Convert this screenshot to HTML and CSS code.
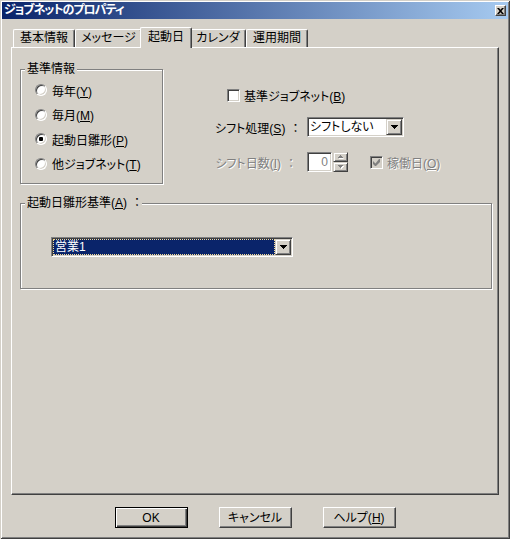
FILE: index.html
```html
<!DOCTYPE html>
<html lang="ja">
<head>
<meta charset="utf-8">
<title>ジョブネットのプロパティ</title>
<link rel="stylesheet" href="styles.css">
</head>
<body>
<div class="window">
  <div class="titlebar">
    <span class="title">ジョブネットのプロパティ</span>
    <span class="close" aria-label="閉じる"><svg width="7" height="6" viewBox="0 0 7 6"><path d="M0 0h2l1.5 1.8L5 0h2L4.5 3 7 6H5L3.5 4.2 2 6H0l2.5-3z" fill="#000"/></svg></span>
  </div>

  <div class="tabs">
    <div class="tab tab--basic">基本情報</div>
    <div class="tab tab--message">メッセージ</div>
    <div class="tab tab--start tab--active">起動日</div>
    <div class="tab tab--calendar">カレンダ</div>
    <div class="tab tab--period">運用期間</div>
  </div>

  <div class="panel">
    <div class="top">
      <div class="group group--base">
        <div class="group-label">基準情報</div>
        <div class="radios">
          <div class="radio-row"><span class="radio"></span><span>毎年(<u>Y</u>)</span></div>
          <div class="radio-row"><span class="radio"></span><span>毎月(<u>M</u>)</span></div>
          <div class="radio-row"><span class="radio radio--checked"></span><span>起動日雛形(<u>P</u>)</span></div>
          <div class="radio-row"><span class="radio"></span><span>他ジョブネット(<u>T</u>)</span></div>
        </div>
      </div>

      <div class="options">
        <div class="check-row">
          <span class="check"></span><span class="check-text">基準ジョブネット(<u>B</u>)</span>
        </div>
        <div class="field-row">
          <span class="field-label">シフト処理(<u>S</u>)<span class="colon">：</span></span>
          <div class="combo combo--shift">
            <span class="combo-text">シフトしない</span>
            <span class="combo-btn"><svg width="7" height="4" viewBox="0 0 7 4"><path d="M0 0h7v1H6v1H5v1H4v1H3V3H2V2H1V1H0z" fill="#000"/></svg></span>
          </div>
        </div>
        <div class="field-row field-row--disabled">
          <span class="field-label">シフト日数(<u>I</u>)<span class="colon">：</span></span>
          <div class="spin">
            <div class="spin-edit">0</div>
            <div class="spin-btns">
              <span class="spin-btn"><svg width="6" height="4" viewBox="0 0 6 4"><path d="M3 1h1v1h1v1H5.5v1H1V3h1V2h1z" fill="#fff"/><path d="M2 0h1v1h1v1h1v1H0V2h1V1h1z" fill="#808080"/></svg></span>
              <span class="spin-btn"><svg width="6" height="4" viewBox="0 0 6 4"><path d="M1 1h5v1H5v1H4v1H3V3H2V2H1z" fill="#fff"/><path d="M0 0h5v1H4v1H3v1H2V2H1V1H0z" fill="#808080"/></svg></span>
            </div>
          </div>
          <span class="check check--disabled"><svg width="7" height="7" viewBox="0 0 7 7"><path d="M6 0h1v3L3 7H2L0 5V2l2.5 2.5z" fill="#808080"/></svg></span>
          <span class="check-text">稼働日(<u>O</u>)</span>
        </div>
      </div>
    </div>

    <div class="group group--ref">
      <div class="group-label">起動日雛形基準(<u>A</u>)<span class="colon">：</span></div>
      <div class="combo combo--ref">
        <span class="combo-text combo-text--selected">営業1</span>
        <span class="combo-btn"><svg width="7" height="4" viewBox="0 0 7 4"><path d="M0 0h7v1H6v1H5v1H4v1H3V3H2V2H1V1H0z" fill="#000"/></svg></span>
      </div>
    </div>
  </div>

  <div class="buttons">
    <button class="btn btn--default" type="button">OK</button>
    <button class="btn" type="button">キャンセル</button>
    <button class="btn" type="button">ヘルプ(<u>H</u>)</button>
  </div>
</div>
</body>
</html>
```

FILE: styles.css
```css
* {
  box-sizing: border-box;
}

html,
body {
  margin: 0;
  padding: 0;
  background: #d4d0c8;
}

body {
  font-family: "Liberation Sans", "Noto Sans CJK JP", sans-serif;
  font-size: 12px;
  color: #000;
  font-feature-settings: "palt";
}

u {
  text-decoration-thickness: 1px;
  text-underline-offset: 1px;
}

.window {
  width: 510px;
  height: 539px;
  padding: 2px;
  overflow: hidden;
  display: flex;
  flex-direction: column;
  background: #d4d0c8;
  box-shadow: inset 1px 1px #d4d0c8, inset -1px -1px #404040, inset 2px 2px #fff, inset -2px -2px #808080;
}

/* Title bar */
.titlebar {
  height: 17px;
  flex: none;
  display: flex;
  align-items: center;
  justify-content: space-between;
  padding: 0 2px 0 2px;
  background: linear-gradient(to right, #0a246a, #a6caf0);
  color: #fff;
  font-weight: bold;
}

.title {
  line-height: 17px;
  letter-spacing: -1px;
  white-space: nowrap;
}

.close {
  width: 11px;
  height: 11px;
  display: flex;
  align-items: center;
  justify-content: center;
  background: #d4d0c8;
  border: 1px solid;
  border-color: #fff #404040 #404040 #fff;
  box-shadow: inset -1px -1px #808080;
}

/* Tabs */
.tabs {
  height: 20px;
  flex: none;
  display: flex;
  align-items: flex-end;
  margin: 8px 0 0 11px;
}

.tab {
  height: 18px;
  line-height: 17px;
  text-align: center;
  white-space: nowrap;
  background: #d4d0c8;
  border-top: 1px solid #fff;
  border-left: 1px solid #fff;
  border-right: 1px solid #404040;
  border-radius: 2px 2px 0 0;
  box-shadow: inset -1px 0 #808080;
  flex: none;
}

.tab--basic { width: 62px; }
.tab--message { width: 67px; }
.tab--start { width: 48px; }
.tab--calendar { width: 56px; }
.tab--period { width: 62px; }

.tab--active {
  width: 52px;
  height: 21px;
  line-height: 18px;
  margin: 0 -2px -1px;
  position: relative;
  z-index: 1;
}

/* Panel */
.panel {
  height: 448px;
  flex: none;
  margin: 0 9px;
  background: #d4d0c8;
  border: 1px solid;
  border-color: #fff #404040 #404040 #fff;
  box-shadow: inset -1px -1px #808080;
}

.top {
  display: flex;
  align-items: flex-start;
}

.group {
  border: 1px solid #808080;
  box-shadow: inset 1px 1px #fff, 1px 1px #fff;
}

.group-label {
  width: fit-content;
  height: 14px;
  line-height: 14px;
  margin: -8px 0 0 4px;
  padding: 0 2px;
  background: #d4d0c8;
  white-space: nowrap;
}

.colon {
  margin-left: 7px;
}

.group--base {
  width: 143px;
  height: 115px;
  margin: 21px 0 0 8px;
  flex: none;
}

.radios {
  padding: 1.7px 0 0 14px;
}

.radio-row {
  height: 24.67px;
  display: flex;
  align-items: center;
  white-space: nowrap;
}

.radio {
  width: 12px;
  height: 12px;
  flex: none;
  margin-right: 5px;
  border-radius: 50%;
  border: 1px solid;
  border-color: #808080 #fff #fff #808080;
  box-shadow: inset 1px 1px #404040, inset -1px -1px #d4d0c8;
  background: #fff;
  display: flex;
  align-items: center;
  justify-content: center;
}

.radio--checked::after {
  content: "";
  width: 4px;
  height: 4px;
  border-radius: 1px;
  background: #000;
}

/* Right-hand options */
.options {
  margin-left: 52px;
  padding-top: 40px;
}

.check-row {
  height: 14px;
  display: flex;
  align-items: center;
  padding-left: 12px;
}

.check {
  width: 13px;
  height: 13px;
  flex: none;
  border: 1px solid;
  border-color: #808080 #fff #fff #808080;
  box-shadow: inset 1px 1px #404040, inset -1px -1px #d4d0c8;
  background: #fff;
  display: flex;
  align-items: center;
  justify-content: center;
}

.check--disabled {
  background: #d4d0c8;
  margin-left: 22px;
}

.check-text {
  margin-left: 4px;
  white-space: nowrap;
}

.field-row {
  height: 20px;
  display: flex;
  align-items: center;
  margin-top: 15px;
}

.field-row--disabled {
  color: #808080;
  text-shadow: 1px 1px #fff;
}

.field-label {
  width: 92px;
  flex: none;
  text-align: right;
  padding-right: 13px;
  white-space: nowrap;
}

/* Combo box */
.combo {
  height: 20px;
  display: flex;
  padding: 1px;
  border: 1px solid;
  border-color: #808080 #fff #fff #808080;
  box-shadow: inset 1px 1px #404040, inset -1px -1px #d4d0c8;
  background: #fff;
}

.combo--shift {
  width: 97px;
}

.combo-text {
  flex: 1;
  min-width: 0;
  line-height: 16px;
  padding-left: 1px;
  white-space: nowrap;
  overflow: hidden;
}

.combo-text--selected {
  background: #0a246a;
  color: #fff;
  border: 1px dotted #f5db95;
  line-height: 14px;
  padding-left: 1px;
}

.combo-btn {
  width: 16px;
  height: 16px;
  flex: none;
  display: flex;
  align-items: center;
  justify-content: center;
  background: #d4d0c8;
  border: 1px solid;
  border-color: #d4d0c8 #404040 #404040 #d4d0c8;
  box-shadow: inset 1px 1px #fff, inset -1px -1px #808080;
}

/* Spin control */
.spin {
  display: flex;
  gap: 1px;
}

.spin-edit {
  width: 25px;
  height: 20px;
  padding: 1px 3px 1px 1px;
  line-height: 16px;
  text-align: right;
  border: 1px solid;
  border-color: #808080 #fff #fff #808080;
  box-shadow: inset 1px 1px #404040, inset -1px -1px #d4d0c8;
  background: #fff;
  text-shadow: none;
}

.spin-btns {
  width: 15px;
  display: flex;
  flex-direction: column;
}

.spin-btn {
  height: 10px;
  display: flex;
  align-items: center;
  justify-content: center;
  background: #d4d0c8;
  border: 1px solid;
  border-color: #d4d0c8 #404040 #404040 #d4d0c8;
  box-shadow: inset 1px 1px #fff, inset -1px -1px #808080;
}

/* Lower group */
.group--ref {
  height: 86px;
  margin: 19px 6px 0 8px;
}

.combo--ref {
  width: 242px;
  margin: 27px 0 0 30px;
}

/* Buttons */
.buttons {
  flex: none;
  display: flex;
  justify-content: center;
  gap: 31px;
  margin-top: 12px;
}

.btn {
  width: 73px;
  height: 21px;
  padding: 0;
  font: inherit;
  color: #000;
  line-height: 18px;
  background: #d4d0c8;
  border: 1px solid;
  border-color: #fff #404040 #404040 #fff;
  border-radius: 0;
  box-shadow: inset -1px -1px #808080;
}

.btn--default {
  border-color: #000;
  box-shadow: inset 1px 1px #fff, inset -1px -1px #404040, inset -2px -2px #808080;
}
```
